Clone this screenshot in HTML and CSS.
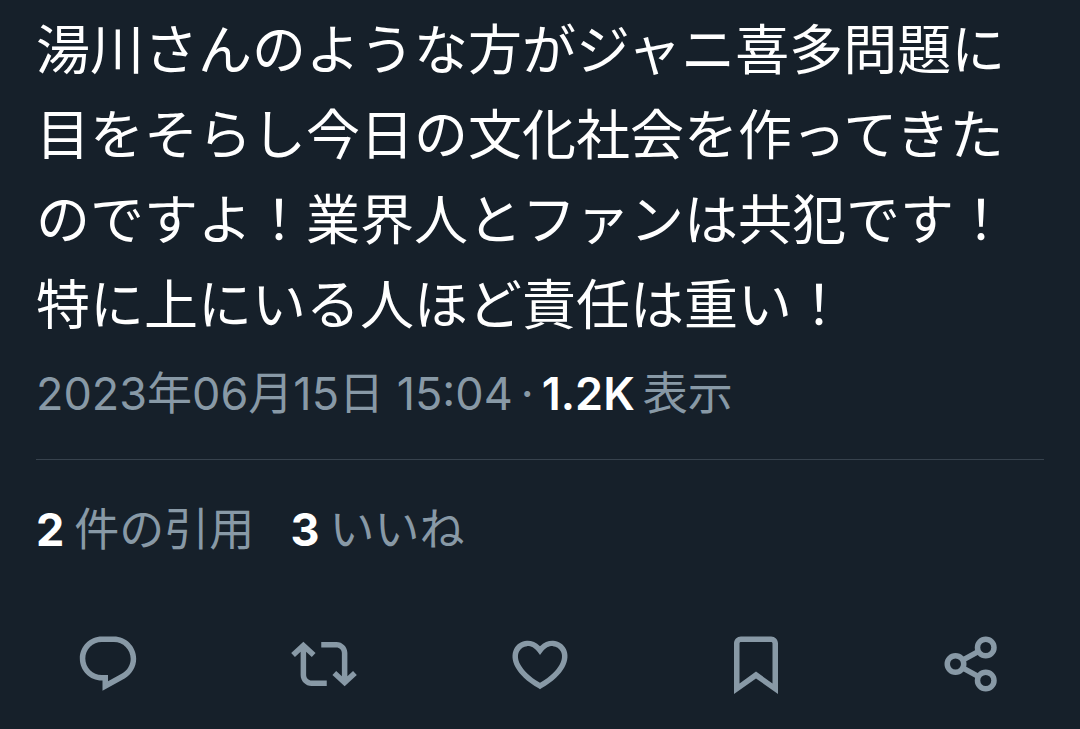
FILE: index.html
```
<!DOCTYPE html>
<html lang="ja">
<head>
  <meta charset="UTF-8" />
  <meta name="viewport" content="width=device-width, initial-scale=1" />
  <title>ポスト</title>
  <link rel="stylesheet" href="styles.css">
</head>
<body>

<article class="post">
  <p class="post-text">湯川さんのような方がジャニ喜多問題に目をそらし今日の文化社会を作ってきたのですよ！業界人とファンは共犯です！特に上にいる人ほど責任は重い！</p>

  <p class="meta">
    <time datetime="2023-06-15T15:04">2023年06月15日 15:04</time>
    <span>·</span>
    <strong class="views">1.2K</strong>
    <span>表示</span>
  </p>

  <div class="stats">
    <a href="#quotes"><strong>2</strong> <span>件の引用</span></a>
    <a href="#likes"><strong>3</strong> <span>いいね</span></a>
  </div>

  <div class="actions">
    <button type="button" aria-label="返信">
      <svg viewBox="0 0 24 24"><path d="M1.751 10c0-4.42 3.584-8 8.005-8h4.366c4.49 0 8.129 3.64 8.129 8.13 0 2.96-1.607 5.68-4.196 7.11l-8.054 4.46v-3.69h-.067c-4.49.1-8.183-3.51-8.183-8.01zm8.005-6c-3.317 0-6.005 2.69-6.005 6 0 3.37 2.77 6.08 6.138 6.01l.351-.01h1.761v2.3l5.087-2.81c1.951-1.08 3.163-3.13 3.163-5.36 0-3.39-2.744-6.13-6.129-6.13H9.756z"/></svg>
    </button>
    <button type="button" aria-label="リポスト">
      <svg viewBox="0 0 24 24"><path d="M4.5 3.88l4.432 4.14-1.364 1.46L5.5 7.55V16c0 1.1.896 2 2 2H13v2H7.5c-2.209 0-4-1.79-4-4V7.55L1.432 9.48.068 8.02 4.5 3.88zM16.5 6H11V4h5.5c2.209 0 4 1.79 4 4v8.45l2.068-1.93 1.364 1.46-4.432 4.14-4.432-4.14 1.364-1.46 2.068 1.93V8c0-1.1-.896-2-2-2z"/></svg>
    </button>
    <button type="button" aria-label="いいね">
      <svg viewBox="0 0 24 24"><path d="M16.697 5.5c-1.222-.06-2.679.51-3.89 2.16l-.805 1.09-.806-1.09C9.984 6.01 8.526 5.44 7.304 5.5c-1.243.07-2.349.78-2.91 1.91-.552 1.12-.633 2.78.479 4.82 1.074 1.97 3.257 4.27 7.129 6.61 3.87-2.34 6.052-4.64 7.126-6.61 1.111-2.04 1.03-3.7.477-4.82-.561-1.13-1.666-1.84-2.908-1.91zm4.187 7.69c-1.351 2.48-4.001 5.12-8.379 7.67l-.503.3-.504-.3c-4.379-2.55-7.029-5.19-8.382-7.67-1.36-2.5-1.41-4.86-.514-6.67.887-1.79 2.647-2.91 4.601-3.01 1.651-.09 3.368.56 4.798 2.01 1.429-1.45 3.146-2.1 4.796-2.01 1.954.1 3.714 1.22 4.601 3.01.896 1.81.846 4.17-.514 6.67z"/></svg>
    </button>
    <button type="button" aria-label="ブックマーク">
      <svg viewBox="0 0 24 24"><path d="M4 4.5C4 3.12 5.119 2 6.5 2h11C18.881 2 20 3.12 20 4.5v18.44l-8-5.71-8 5.71V4.5zM6.5 4c-.276 0-.5.22-.5.5v14.56l6-4.29 6 4.29V4.5c0-.28-.224-.5-.5-.5h-11z"/></svg>
    </button>
    <button type="button" aria-label="共有">
      <svg class="line-icon" viewBox="0 0 24 24">
        <circle cx="6" cy="12" r="3"/>
        <circle cx="17" cy="6" r="3"/>
        <circle cx="17" cy="18" r="3"/>
        <path d="M8.6 10.6l5.8-3.2M8.6 13.4l5.8 3.2"/>
      </svg>
    </button>
  </div>
</article>

</body>
</html>
```
FILE: styles.css
```
body {
  margin: 0;
  background: #16202a;
  color: #8899a6;
  font-family: Inter, "Noto Sans CJK JP", sans-serif;
}
p {
  margin: 0;
}
strong {
  color: #fff;
  font-weight: 700;
}
.post {
  padding-top: 4px;
}
.post-text {
  padding: 0 36px;
  color: #fff;
  font-family: "Noto Sans CJK JP", sans-serif;
  font-size: 54px;
  line-height: 85px;
}
.meta {
  display: flex;
  flex-wrap: wrap;
  gap: 0 8px;
  margin: 0 36px;
  padding: 17px 0 32px;
  border-bottom: 1px solid #37424d;
  font-size: 45px;
  line-height: 66px;
}
.views {
  font-weight: 600;
}
.stats {
  display: flex;
  flex-wrap: wrap;
  gap: 0 36px;
  padding: 37px 36px 0;
  font-size: 45px;
  line-height: 66px;
}
.stats a {
  display: flex;
  gap: 10px;
  color: inherit;
  text-decoration: none;
}
.stats a:hover {
  text-decoration: underline;
}
.actions {
  display: grid;
  grid-template-columns: repeat(5, 1fr);
  justify-items: center;
  padding: 68px 0 32px;
}
.actions button {
  padding: 0;
  border: none;
  background: none;
  color: inherit;
  cursor: pointer;
}
.actions svg {
  display: block;
  width: 66px;
  height: 66px;
  fill: currentColor;
}
.actions .line-icon {
  fill: none;
  stroke: currentColor;
  stroke-width: 2;
}
```
